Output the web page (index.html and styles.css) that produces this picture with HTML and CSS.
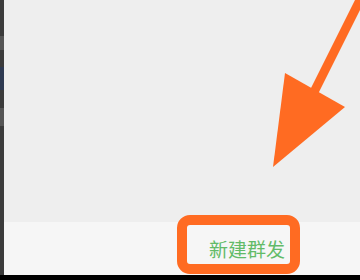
FILE: index.html
```html
<!DOCTYPE html>
<html lang="zh">
<head>
<meta charset="utf-8">
<link rel="stylesheet" href="styles.css">
</head>
<body>
<div class="screen">
  <div class="top">
    <div class="side">
      <span class="side-mark m1"></span>
      <span class="side-mark m2"></span>
      <span class="side-mark m3"></span>
    </div>
    <div class="content">
      <div class="main"></div>
      <div class="footer">
        <span class="new-btn">新建群发</span>
      </div>
    </div>
  </div>
  <div class="bottom"></div>
  <div class="highlight"></div>
  <svg class="arrow" width="360" height="280" viewBox="0 0 360 280">
    <line x1="363" y1="-6" x2="312" y2="96" stroke="#ff6b22" stroke-width="9"/>
    <polygon points="285,73 345,107 273,167" fill="#ff6b22"/>
  </svg>
</div>
</body>
</html>
```

FILE: styles.css
```css
html, body {
  margin: 0;
  padding: 0;
}
body {
  width: 360px;
  height: 280px;
  overflow: hidden;
  font-family: "Noto Sans CJK SC", "Noto Sans", sans-serif;
}
.screen {
  position: relative;
  width: 360px;
  height: 280px;
  display: flex;
  flex-direction: column;
  background: #000;
}
.top {
  flex: 1;
  display: flex;
}
.side {
  width: 4px;
  background: #3b3b3b;
  display: flex;
  flex-direction: column;
}
.side-mark {
  display: block;
  width: 4px;
}
.m1 {
  margin-top: 36px;
  height: 14px;
  background: #555;
}
.m2 {
  margin-top: 17px;
  height: 23px;
  background: #2e3a52;
}
.m3 {
  margin-top: 18px;
  height: 18px;
  background: #555;
}
.content {
  flex: 1;
  display: flex;
  flex-direction: column;
}
.main {
  height: 222px;
  background: #eeeeee;
}
.footer {
  flex: 1;
  background: #f6f6f6;
  display: flex;
  align-items: center;
  justify-content: flex-end;
  padding-right: 75px;
}
.new-btn {
  font-size: 19px;
  line-height: 1;
  color: #62bb68;
}
.bottom {
  height: 5px;
  background: #000;
}
.highlight {
  position: absolute;
  left: 177px;
  top: 215px;
  width: 103px;
  height: 39px;
  border: 10px solid #ff6b22;
  border-radius: 13px;
}
.arrow {
  position: absolute;
  left: 0;
  top: 0;
}
```
